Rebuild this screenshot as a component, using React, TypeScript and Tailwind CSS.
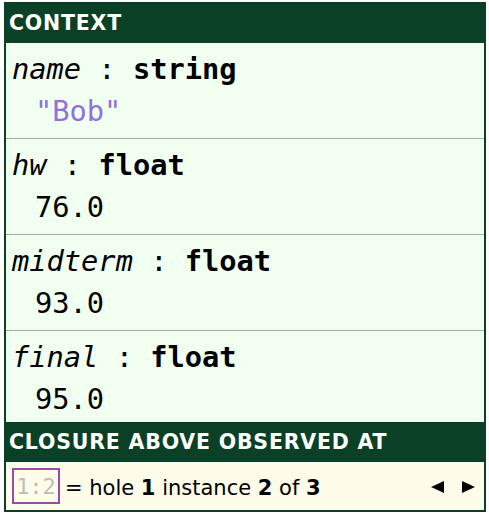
const mono = "font-['DejaVu_Sans_Mono',monospace]";
const head = "font-['DejaVu_Sans',sans-serif]";

type Entry = { name: string; type: string; value: string; str?: boolean };

const entries: Entry[] = [
  { name: "name", type: "string", value: '"Bob"', str: true },
  { name: "hw", type: "float", value: "76.0" },
  { name: "midterm", type: "float", value: "93.0" },
  { name: "final", type: "float", value: "95.0" },
];

function Tri({ dir }: { dir: "l" | "r" }) {
  return (
    <svg width="15" height="14" viewBox="0 0 15 14">
      {dir === "l" ? <polygon points="14,1 14,13 1,7" fill="#000" /> : <polygon points="1,1 1,13 14,7" fill="#000" />}
    </svg>
  );
}

export default function App() {
  return (
    <div className="w-[489px] h-[514px] bg-white pt-[2px] pl-[4px]">
      <div className="w-[482px] h-[510px] border-2 border-[#0a4126] flex flex-col">
        <div className={`h-[39px] bg-[#0a4126] text-white font-bold text-[20.5px] tracking-[0.8px] leading-[39px] pl-[3px] ${head}`}>
          CONTEXT
        </div>
        <div className="bg-[#f0fff0] flex-1 flex flex-col">
          {entries.map((e, i) => (
            <div
              key={e.name}
              className={`px-[6px] pt-[5px] ${i < entries.length - 1 ? "pb-[6px] border-b border-[#a9a9a9]" : "pb-[2px]"} ${mono} text-[28.7px] leading-[42px] text-black`}
            >
              <div className="whitespace-pre">
                <span className="italic">{e.name}</span> : <span className="font-bold">{e.type}</span>
              </div>
              <div className={`pl-[23px] ${e.str ? "text-[#9370db]" : ""}`}>{e.value}</div>
            </div>
          ))}
        </div>
        <div className={`h-[40px] bg-[#0a4126] text-white font-bold text-[20.5px] tracking-[0.8px] leading-[40px] pl-[3px] ${head}`}>
          CLOSURE ABOVE OBSERVED AT
        </div>
        <div className="h-[49px] bg-[#fdfdea] flex items-center pl-[6px] pr-[8px]">
          <span className={`border-2 border-[#9c4ba8] h-[36px] w-[48px] flex items-center justify-center text-[22px] text-[#bdbdbd] ${mono}`}>
            1:2
          </span>
          <span className={`ml-[5px] pt-[5px] text-[21px] text-black ${head}`}>
            = hole <b>1</b> instance <b>2</b> of <b>3</b>
          </span>
          <div className="ml-auto pt-[1px] flex items-center gap-[16px]">
            <Tri dir="l" />
            <Tri dir="r" />
          </div>
        </div>
      </div>
    </div>
  );
}
